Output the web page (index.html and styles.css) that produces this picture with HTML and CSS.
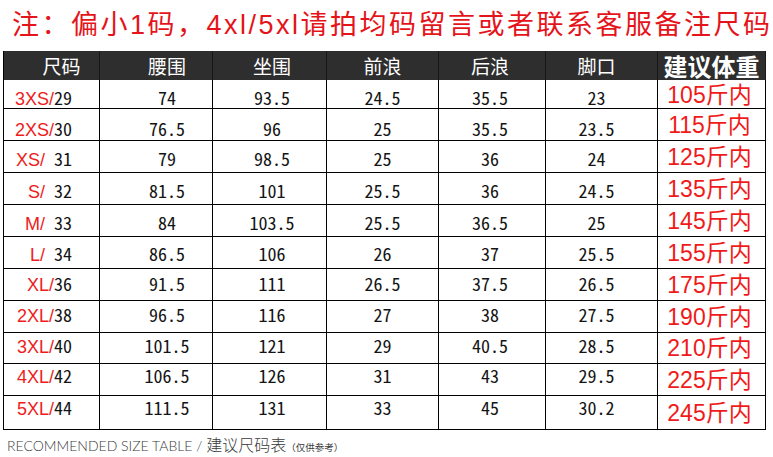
FILE: index.html
```html
<!DOCTYPE html>
<html lang="zh-CN">
<head>
<meta charset="utf-8">
<title>建议尺码表</title>
<link rel="stylesheet" href="styles.css">
</head>
<body>
<div class="sheet">
  <h1 class="note">注：偏小1码，4xl/5xl请拍均码留言或者联系客服备注尺码</h1>
  <div class="table">
    <div class="row head">
      <div class="c c1">尺码</div>
      <div class="c c2">腰围</div>
      <div class="c c3">坐围</div>
      <div class="c c4">前浪</div>
      <div class="c c5">后浪</div>
      <div class="c c6">脚口</div>
      <div class="c c7 big">建议体重</div>
    </div>
    <div class="row">
      <div class="c c1"><span class="v"><span class="sz">3XS/</span>29</span></div>
      <div class="c c2"><span class="v">74</span></div>
      <div class="c c3"><span class="v">93.5</span></div>
      <div class="c c4"><span class="v">24.5</span></div>
      <div class="c c5"><span class="v">35.5</span></div>
      <div class="c c6"><span class="v">23</span></div>
      <div class="c c7"><span class="wt">105斤内</span></div>
    </div>
    <div class="row">
      <div class="c c1"><span class="v"><span class="sz">2XS/</span>30</span></div>
      <div class="c c2"><span class="v">76.5</span></div>
      <div class="c c3"><span class="v">96</span></div>
      <div class="c c4"><span class="v">25</span></div>
      <div class="c c5"><span class="v">35.5</span></div>
      <div class="c c6"><span class="v">23.5</span></div>
      <div class="c c7"><span class="wt">115斤内</span></div>
    </div>
    <div class="row">
      <div class="c c1"><span class="v"><span class="sz">XS/</span> 31</span></div>
      <div class="c c2"><span class="v">79</span></div>
      <div class="c c3"><span class="v">98.5</span></div>
      <div class="c c4"><span class="v">25</span></div>
      <div class="c c5"><span class="v">36</span></div>
      <div class="c c6"><span class="v">24</span></div>
      <div class="c c7"><span class="wt">125斤内</span></div>
    </div>
    <div class="row">
      <div class="c c1"><span class="v"><span class="sz">S/</span> 32</span></div>
      <div class="c c2"><span class="v">81.5</span></div>
      <div class="c c3"><span class="v">101</span></div>
      <div class="c c4"><span class="v">25.5</span></div>
      <div class="c c5"><span class="v">36</span></div>
      <div class="c c6"><span class="v">24.5</span></div>
      <div class="c c7"><span class="wt">135斤内</span></div>
    </div>
    <div class="row">
      <div class="c c1"><span class="v"><span class="sz">M/</span> 33</span></div>
      <div class="c c2"><span class="v">84</span></div>
      <div class="c c3"><span class="v">103.5</span></div>
      <div class="c c4"><span class="v">25.5</span></div>
      <div class="c c5"><span class="v">36.5</span></div>
      <div class="c c6"><span class="v">25</span></div>
      <div class="c c7"><span class="wt">145斤内</span></div>
    </div>
    <div class="row">
      <div class="c c1"><span class="v"><span class="sz">L/</span> 34</span></div>
      <div class="c c2"><span class="v">86.5</span></div>
      <div class="c c3"><span class="v">106</span></div>
      <div class="c c4"><span class="v">26</span></div>
      <div class="c c5"><span class="v">37</span></div>
      <div class="c c6"><span class="v">25.5</span></div>
      <div class="c c7"><span class="wt">155斤内</span></div>
    </div>
    <div class="row">
      <div class="c c1"><span class="v"><span class="sz">XL/</span>36</span></div>
      <div class="c c2"><span class="v">91.5</span></div>
      <div class="c c3"><span class="v">111</span></div>
      <div class="c c4"><span class="v">26.5</span></div>
      <div class="c c5"><span class="v">37.5</span></div>
      <div class="c c6"><span class="v">26.5</span></div>
      <div class="c c7"><span class="wt">175斤内</span></div>
    </div>
    <div class="row">
      <div class="c c1"><span class="v"><span class="sz">2XL/</span>38</span></div>
      <div class="c c2"><span class="v">96.5</span></div>
      <div class="c c3"><span class="v">116</span></div>
      <div class="c c4"><span class="v">27</span></div>
      <div class="c c5"><span class="v">38</span></div>
      <div class="c c6"><span class="v">27.5</span></div>
      <div class="c c7"><span class="wt">190斤内</span></div>
    </div>
    <div class="row">
      <div class="c c1"><span class="v"><span class="sz">3XL/</span>40</span></div>
      <div class="c c2"><span class="v">101.5</span></div>
      <div class="c c3"><span class="v">121</span></div>
      <div class="c c4"><span class="v">29</span></div>
      <div class="c c5"><span class="v">40.5</span></div>
      <div class="c c6"><span class="v">28.5</span></div>
      <div class="c c7"><span class="wt">210斤内</span></div>
    </div>
    <div class="row">
      <div class="c c1"><span class="v"><span class="sz">4XL/</span>42</span></div>
      <div class="c c2"><span class="v">106.5</span></div>
      <div class="c c3"><span class="v">126</span></div>
      <div class="c c4"><span class="v">31</span></div>
      <div class="c c5"><span class="v">43</span></div>
      <div class="c c6"><span class="v">29.5</span></div>
      <div class="c c7"><span class="wt">225斤内</span></div>
    </div>
    <div class="row">
      <div class="c c1"><span class="v"><span class="sz">5XL/</span>44</span></div>
      <div class="c c2"><span class="v">111.5</span></div>
      <div class="c c3"><span class="v">131</span></div>
      <div class="c c4"><span class="v">33</span></div>
      <div class="c c5"><span class="v">45</span></div>
      <div class="c c6"><span class="v">30.2</span></div>
      <div class="c c7"><span class="wt">245斤内</span></div>
    </div>
  </div>
  <p class="caption"><span class="en">RECOMMENDED SIZE TABLE / </span><span class="cn">建议尺码表</span><span class="sm">（仅供参考）</span></p>
</div>
</body>
</html>
```

FILE: styles.css
```css
html, body {
  margin: 0;
  padding: 0;
  background: #fff;
}

.sheet {
  width: 773px;
  height: 457px;
  overflow: hidden;
}

.note {
  margin: 0;
  padding: 12px 0 0 12px;
  font-family: "Liberation Sans", "Noto Sans CJK SC", sans-serif;
  font-size: 27px;
  line-height: 27px;
  font-weight: normal;
  letter-spacing: 2.5px;
  color: #e5141b;
  white-space: nowrap;
}

.table {
  margin: 12px 0 0 3px;
  width: 763px;
  box-sizing: border-box;
  border-left: 1px solid #000;
}

.row {
  display: grid;
  grid-template-columns: 96px 113px 114px 112px 107px 112px 108px;
  height: 32px;
  box-sizing: border-box;
  border-bottom: 1px solid #000;
}

.row.head {
  height: 29px;
  border-bottom: 0;
  background: #2e2e2e;
}

.row:nth-child(2) { height: 29px; }
.row:nth-child(10) { height: 31px; }
.row:nth-child(12) { height: 34px; }

.c {
  box-sizing: border-box;
  border-right: 1px solid #000;
  display: flex;
  justify-content: center;
  align-items: flex-start;
  white-space: pre;
}

.head .c {
  align-items: center;
  border-right-color: #161616;
  color: #fff;
  font-family: "Noto Sans CJK SC", sans-serif;
  font-size: 19px;
  line-height: 19px;
}

.head .c.big {
  font-size: 24px;
  line-height: 24px;
  font-weight: bold;
}

.head .c1 { padding-left: 20px; }
.row:not(.head) .c1 { justify-content: flex-end; padding-right: 27px; }
.c2 { padding-left: 22px; }
.c3 { padding-left: 5px; }
.c5 { padding-right: 4px; }
.c6 { padding-right: 10px; }
.row:not(.head) .c7 { align-items: center; padding-right: 4px; }

.row:nth-child(2) .c:not(.c7) { padding-top: 7px; }
.row:nth-child(3) .c:not(.c7) { padding-top: 9px; }
.row:nth-child(4) .c:not(.c7) { padding-top: 7px; }
.row:nth-child(5) .c:not(.c7) { padding-top: 7px; }
.row:nth-child(6) .c:not(.c7) { padding-top: 7px; }
.row:nth-child(7) .c:not(.c7) { padding-top: 6px; }
.row:nth-child(8) .c:not(.c7) { padding-top: 4px; }
.row:nth-child(9) .c:not(.c7) { padding-top: 3px; }
.row:nth-child(10) .c:not(.c7) { padding-top: 2px; }
.row:nth-child(11) .c:not(.c7) { padding-top: 1px; }
.row:nth-child(12) .c:not(.c7) { padding-top: 1px; }

.v {
  font-family: "Noto Sans CJK JP", sans-serif;
  font-feature-settings: "hwid" 1;
  font-size: 18px;
  line-height: 20px;
  color: #141414;
}

.sz {
  font-family: "Liberation Sans", sans-serif;
  font-feature-settings: normal;
  color: #ee1c1c;
}

.wt {
  font-family: "Liberation Sans", "Noto Sans CJK SC", sans-serif;
  font-size: 23px;
  line-height: 24px;
  color: #f01a1a;
  white-space: nowrap;
}

.caption {
  margin: 6px 0 0 7px;
  color: #3a3a3a;
  white-space: nowrap;
  line-height: 16px;
}

.caption .en {
  font-family: "Lato", "Liberation Sans", sans-serif;
  font-weight: 300;
  font-size: 14px;
  white-space: pre;
}

.caption .cn {
  font-family: "Noto Sans CJK SC", sans-serif;
  font-size: 16px;
  font-weight: 300;
}

.caption .sm {
  font-family: "Noto Sans CJK SC", sans-serif;
  font-size: 9.5px;
}
```
